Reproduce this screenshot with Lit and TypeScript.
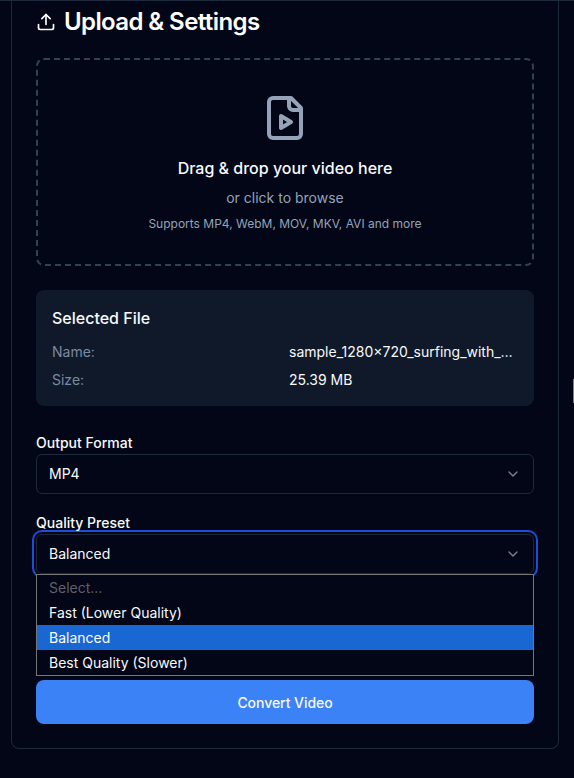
import { LitElement, html, css } from "lit";
import { customElement } from "lit/decorators.js";

@customElement("app-root")
export class AppRoot extends LitElement {
  static styles = css`
    :host {
      display: block;
      position: relative;
      min-height: 778px;
      box-sizing: border-box;
      background: #020617;
      color: #f8fafc;
      font-family: Inter, "Liberation Sans", sans-serif;
      border-top: 1px solid #1e293b;
      padding: 0 15px 30px 11px;
    }
    * { box-sizing: border-box; }
    .card {
      border: 1px solid #1e293b;
      border-top: 0;
      border-radius: 0 0 8px 8px;
      padding: 0 24px 23px;
      height: 748px;
    }
    .title {
      display: flex;
      align-items: center;
      gap: 8px;
      height: 57px;
      padding: 0 0 15px 0;
      font-size: 24px;
      font-weight: 600;
      letter-spacing: -0.6px;
      line-height: 32px;
      color: #fff;
    }
    .title svg { width: 20px; height: 20px; flex: none; }
    .drop {
      height: 208px;
      border: 2px dashed #334155;
      border-radius: 8px;
      display: flex;
      flex-direction: column;
      align-items: center;
      padding-top: 34px;
    }
    .drop svg { width: 48px; height: 48px; color: #94a3b8; display: block; }
    .drop .main { font-size: 16px; font-weight: 500; line-height: 24px; margin-top: 14px; color: #f8fafc; }
    .drop .or { font-size: 14px; line-height: 20px; margin-top: 8px; color: #94a3b8; }
    .drop .sup { font-size: 12px; line-height: 16px; margin-top: 8px; color: #94a3b8; }
    .file {
      margin-top: 24px;
      height: 116px;
      background: #101929;
      border-radius: 8px;
      padding: 16px;
    }
    .file h3 { margin: 0 0 12px; font-size: 16px; font-weight: 500; line-height: 24px; color: #f8fafc; }
    .grid {
      display: grid;
      grid-template-columns: 1fr 1fr;
      column-gap: 8px;
      row-gap: 8px;
      font-size: 14px;
      line-height: 20px;
    }
    .k { color: #7a8aa1; }
    .v { color: #f8fafc; white-space: nowrap; overflow: hidden; text-overflow: ellipsis; }
    .label { display: block; font-size: 14px; font-weight: 500; line-height: 20px; color: #f8fafc; margin-bottom: 1px; }
    .field { position: relative; }
    .field.first { margin-top: 27px; }
    .field.second { margin-top: 19px; }
    .select {
      height: 40px;
      border: 1px solid #1e293b;
      border-radius: 6px;
      background: #020617;
      display: flex;
      align-items: center;
      justify-content: space-between;
      padding: 0 12px;
      font-size: 14px;
      color: #f8fafc;
    }
    .select span { margin-bottom: 2px; }
    .select.focus { box-shadow: 0 0 0 2px #020617, 0 0 0 4px #1d4ed8; }
    .select svg { width: 16px; height: 16px; color: #f8fafc; opacity: 0.5; }
    .menu {
      position: absolute;
      left: 0;
      right: 0;
      top: 61px;
      border: 1px solid #767676;
      background: #020617;
      font-size: 14px;
      padding: 0;
      height: 102px;
      z-index: 2;
    }
    .opt { height: 25px; line-height: 25px; padding: 0 12px; color: #f8fafc; }
    .opt.muted { color: #5f6166; }
    .opt.sel { background: #1967d2; color: #fff; }
    .btn {
      margin-top: 106px;
      height: 44px;
      width: 100%;
      border: 0;
      border-radius: 8px;
      background: #3b82f6;
      color: #f8fafc;
      font: 500 14px Inter, "Liberation Sans", sans-serif;
      letter-spacing: -0.05px;
      display: flex;
      align-items: center;
      justify-content: center;
    }
    .sliver {
      position: absolute;
      right: 0;
      top: 378px;
      width: 1px;
      height: 24px;
      background: #7a7f8a;
    }
  `;

  private chevron() {
    return html`<svg viewBox="0 0 24 24" fill="none" stroke="currentColor" stroke-width="2" stroke-linecap="round" stroke-linejoin="round"><path d="m6 9 6 6 6-6"/></svg>`;
  }

  render() {
    return html`
      <div class="card">
        <div class="title">
          <svg viewBox="0 0 24 24" fill="none" stroke="currentColor" stroke-width="2" stroke-linecap="round" stroke-linejoin="round"><path d="M21 15v4a2 2 0 0 1-2 2H5a2 2 0 0 1-2-2v-4"/><polyline points="17 8 12 3 7 8"/><line x1="12" y1="3" x2="12" y2="15"/></svg>
          <span>Upload &amp; Settings</span>
        </div>
        <div class="drop">
          <svg viewBox="0 0 24 24" fill="none" stroke="currentColor" stroke-width="2" stroke-linecap="round" stroke-linejoin="round"><path d="M15 2H6a2 2 0 0 0-2 2v16a2 2 0 0 0 2 2h12a2 2 0 0 0 2-2V7Z"/><path d="M14 2v4a2 2 0 0 0 2 2h4"/><path d="m10 11 5 3-5 3v-6Z"/></svg>
          <div class="main">Drag &amp; drop your video here</div>
          <div class="or">or click to browse</div>
          <div class="sup">Supports MP4, WebM, MOV, MKV, AVI and more</div>
        </div>
        <div class="file">
          <h3>Selected File</h3>
          <div class="grid">
            <div class="k">Name:</div><div class="v">sample_1280×720_surfing_with_audio.mp4</div>
            <div class="k">Size:</div><div class="v">25.39 MB</div>
          </div>
        </div>
        <div class="field first">
          <span class="label">Output Format</span>
          <div class="select"><span>MP4</span>${this.chevron()}</div>
        </div>
        <div class="field second">
          <span class="label">Quality Preset</span>
          <div class="select focus"><span>Balanced</span>${this.chevron()}</div>
          <div class="menu">
            <div class="opt muted">Select...</div>
            <div class="opt">Fast (Lower Quality)</div>
            <div class="opt sel">Balanced</div>
            <div class="opt">Best Quality (Slower)</div>
          </div>
        </div>
        <div class="btn">Convert Video</div>
      </div>
      <div class="sliver"></div>
    `;
  }
}
